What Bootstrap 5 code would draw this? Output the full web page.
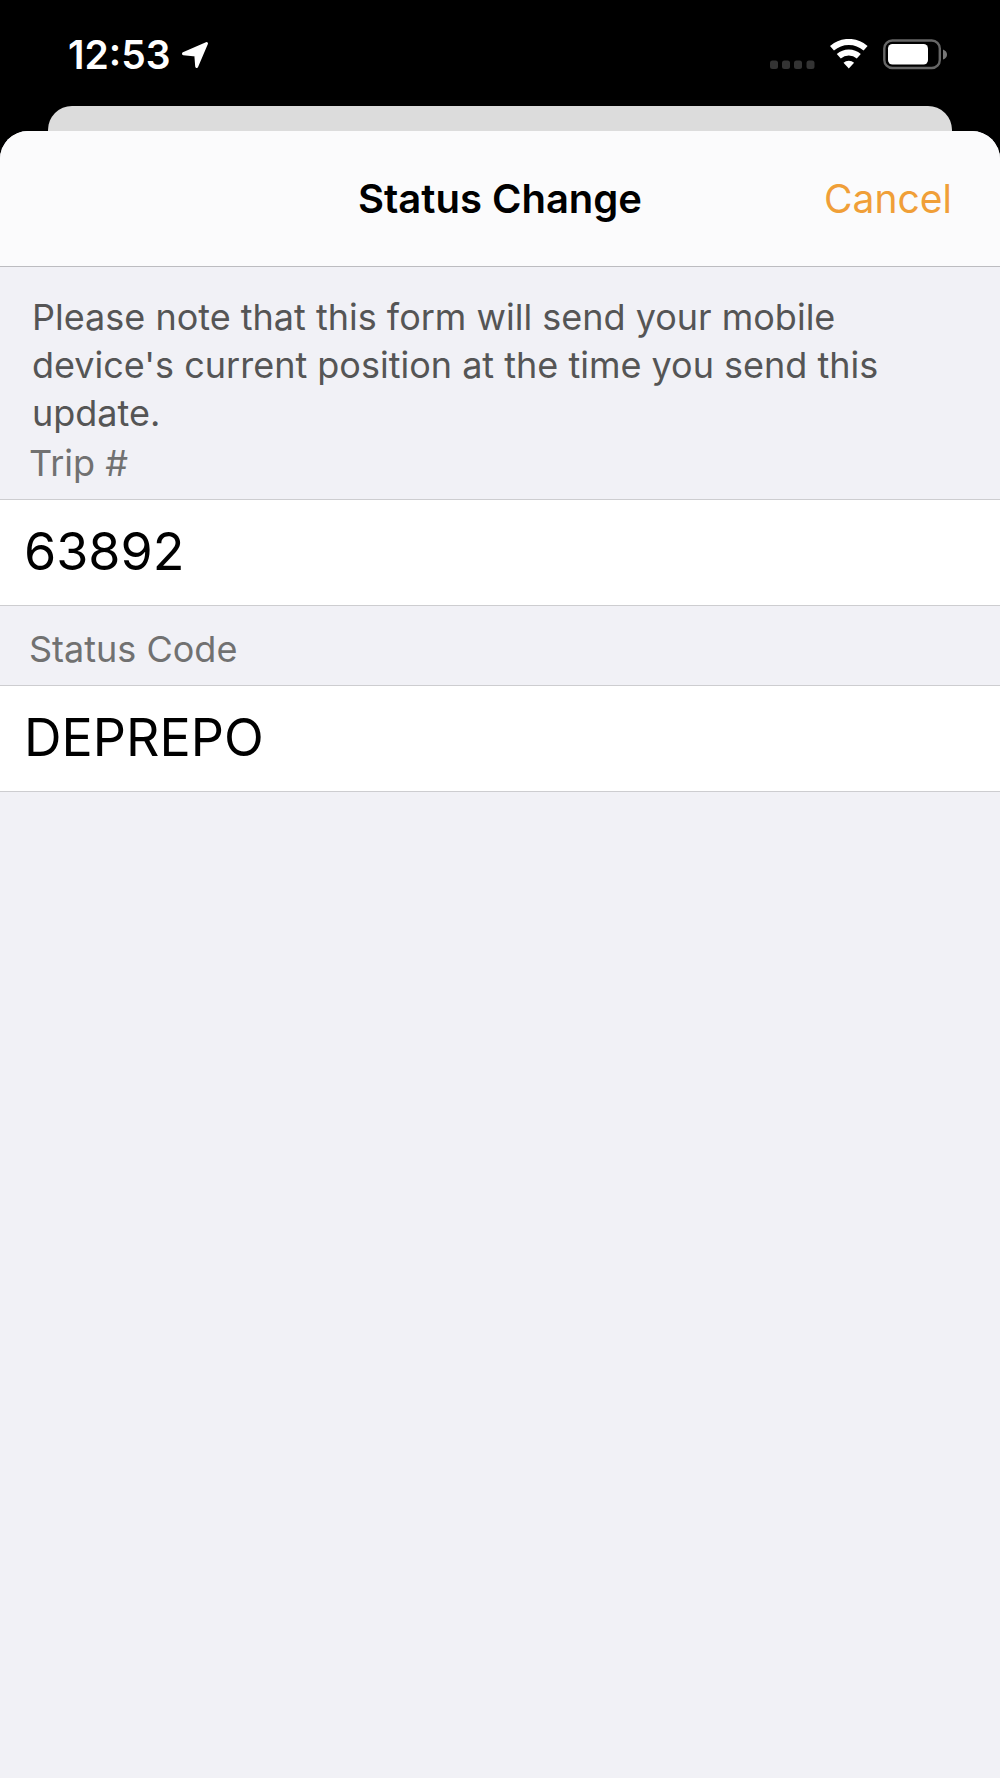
<!DOCTYPE html>
<html lang="en">
<head>
<meta charset="utf-8">
<meta name="viewport" content="width=device-width, initial-scale=1">
<title>Status Change</title>
<link href="https://cdn.jsdelivr.net/npm/bootstrap@5.3.0/dist/css/bootstrap.min.css" rel="stylesheet">
<style>
  body { font-family: Inter, "Liberation Sans", sans-serif; background: #000; color: #000; }
  .status-bar { height: 106px; padding: 3px 53px 0 68px; }
  .clock-group { gap: 10px; }
  .clock { font-size: 39px; line-height: 48px; font-weight: 600; }
  .sheet-behind { height: 25px; margin: 0 48px; background: #dcdcdc; border-radius: 24px 24px 0 0; }
  .sheet { background: #f1f1f6; border-radius: 28px 28px 0 0; overflow: hidden; }
  .sheet-header { height: 136px; background: #fbfbfc; border-bottom: 1px solid #bcbcc0; padding: 0 48px; }
  .sheet-title { font-size: 40px; line-height: 48px; font-weight: 600; }
  .cancel-btn { font-size: 39px; line-height: 48px; color: #f09f38; }
  .cancel-btn:hover { color: #d98a25; }
  .note { font-size: 36px; line-height: 48px; color: #555; padding: 26px 32px 0; }
  .field-label { font-size: 36px; line-height: 48px; color: #717171; padding: 2px 29px 12px; }
  .field-label.spaced { padding-top: 19px; }
  .field-input, .field-input:focus { font-size: 52px; line-height: 64px; color: #000; background: #fff; padding: 20px 24px 21px;
    border: solid #cdcdd0; border-width: 1px 0; border-radius: 0; box-shadow: none; }
</style>
<script src="https://cdn.jsdelivr.net/npm/bootstrap@5.3.0/dist/js/bootstrap.bundle.min.js"></script>
</head>
<body class="min-vh-100 d-flex flex-column">
<div class="status-bar d-flex align-items-center justify-content-between text-white">
  <div class="clock-group d-flex align-items-center">
    <span class="clock">12:53</span>
    <svg width="28" height="28" viewBox="0 0 28 28" aria-hidden="true"><path fill="#fff" stroke="#fff" stroke-width="3" stroke-linejoin="round" d="M25.500 2.500 15.700 25.500 14.800 14 2.500 12.700Z"/></svg>
  </div>
  <svg width="178" height="32" viewBox="0 0 178 32" aria-hidden="true">
    <g fill="#333"><rect x="1" y="21.500" width="8" height="8.500" rx="2.500"/><rect x="13" y="21.500" width="8" height="8.500" rx="2.500"/><rect x="25" y="21.500" width="8" height="8.500" rx="2.500"/><rect x="37.500" y="21.500" width="8" height="8.500" rx="2.500"/></g>
    <g fill="none" stroke="#fff" stroke-width="6"><path d="M63 9.200a25.500 25.500 0 0 1 33.600 0"/><path d="M69.800 17.200a15 15 0 0 1 20 0"/></g>
    <path fill="#fff" d="M74.500 23.800a8 8 0 0 1 10.600 0L79.800 29.500Z"/>
    <rect x="115.300" y="1.500" width="55.500" height="27.500" rx="8" fill="none" stroke="#666" stroke-width="2.400"/>
    <rect x="119" y="5" width="40" height="20.500" rx="4.500" fill="#fff"/>
    <path fill="#777" d="M174 10.500q4 1.500 4 5t-4 5Z"/>
  </svg>
</div>
<div class="sheet-behind"></div>
<main class="sheet flex-grow-1">
  <header class="sheet-header d-flex align-items-center">
    <div class="flex-fill w-100"></div>
    <h1 class="sheet-title m-0 text-nowrap">Status Change</h1>
    <div class="flex-fill w-100 text-end"><button type="button" class="btn cancel-btn border-0 p-0">Cancel</button></div>
  </header>
  <form>
    <p class="note m-0">Please note that this form will send your mobile device's current position at the time you send this update.</p>
    <label class="field-label d-block" for="trip">Trip #</label>
    <input class="form-control field-input" id="trip" type="text" value="63892">
    <label class="field-label spaced d-block" for="code">Status Code</label>
    <input class="form-control field-input" id="code" type="text" value="DEPREPO">
  </form>
</main>
</body>
</html>
